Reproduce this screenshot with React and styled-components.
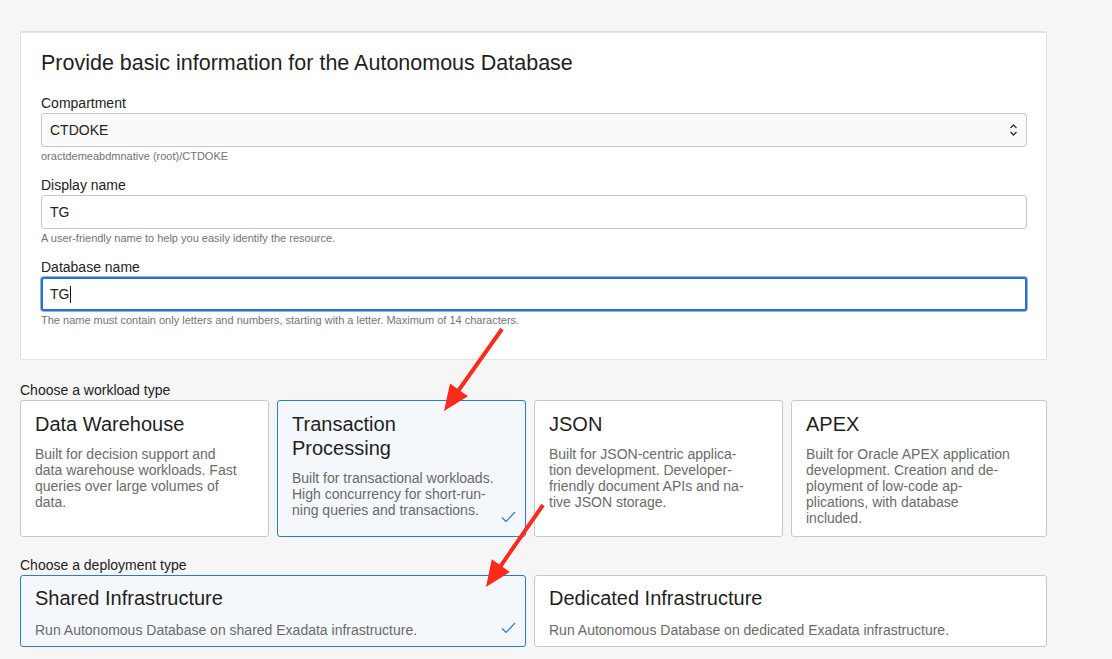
import React from 'react'
import styled, { createGlobalStyle } from 'styled-components'

const GlobalStyle = createGlobalStyle`
  html, body {
    margin: 0;
    padding: 0;
    background: #f6f6f6;
    font-family: 'Liberation Sans', Arial, Helvetica, sans-serif;
    color: #222;
  }
`

const Page = styled.div`
  position: relative;
  width: 1027px;
  padding: 31px 0 12px 20px;
`

const Panel = styled.section`
  background: #fff;
  border: 1px solid #e3e3e3;
  border-top: 2px solid #e2e3e8;
  border-radius: 2px;
  padding: 18px 19px 32px 20px;
`

const Heading = styled.h2`
  margin: 0 0 20px;
  font-size: 21.5px;
  line-height: 24px;
  font-weight: 400;
  color: #1f1f1f;
`

const Field = styled.div`
  & + & {
    margin-top: 14px;
  }
`

const Label = styled.div`
  font-size: 14px;
  line-height: 16px;
  color: #222;
  margin-bottom: 2px;
`

const Box = styled.div`
  position: relative;
  box-sizing: border-box;
  height: 34px;
  display: flex;
  align-items: center;
  padding: 0 8px;
  font-size: 14px;
  color: #222;
  background: ${(p) => (p.$select ? '#fafafa' : '#fff')};
  border: ${(p) => (p.$focused ? '2px solid #2e6fcb' : '1px solid #c8c8c8')};
  border-radius: 3px;
  box-shadow: ${(p) => (p.$focused ? '0 0 0 1px #8fb4ea' : 'none')};
  ${(p) => p.$focused && 'padding-left: 7px;'}
`

const Caret = styled.span`
  display: inline-block;
  width: 1px;
  height: 17px;
  background: #111;
  margin-left: 1px;
`

const Chevron = styled.svg`
  position: absolute;
  right: 8px;
  top: 9px;
`

const Help = styled.div`
  margin-top: 3px;
  font-size: 11px;
  line-height: 13px;
  color: #737373;
`

const SectionLabel = styled.div`
  font-size: 14px;
  line-height: 16px;
  color: #222;
  margin: ${(p) => p.$top}px 0 2px;
`

const CardGrid = styled.div`
  display: grid;
  grid-template-columns: ${(p) => p.$cols};
  gap: 8px;
`

const Card = styled.div`
  position: relative;
  box-sizing: border-box;
  height: ${(p) => p.$height}px;
  padding: ${(p) => p.$padTop}px 14px 10px;
  border: 1px solid ${(p) => (p.$selected ? '#2c78d4' : '#c9c9c9')};
  border-radius: 3px;
  background: ${(p) => (p.$selected ? '#f4f7fb' : '#fff')};
`

const CardTitle = styled.div`
  font-size: 20px;
  line-height: 24px;
  color: #1f1f1f;
`

const CardDesc = styled.div`
  margin-top: ${(p) => p.$gap}px;
  font-size: 14px;
  line-height: 16px;
  color: #6a6a6a;
  white-space: nowrap;
`

const Check = styled.svg`
  position: absolute;
  right: 9px;
  bottom: ${(p) => p.$bottom}px;
`

const Arrows = styled.svg`
  position: absolute;
  left: 0;
  top: 0;
  pointer-events: none;
`

const workloads = [
  {
    title: ['Data Warehouse'],
    desc: ['Built for decision support and', 'data warehouse workloads. Fast', 'queries over large volumes of', 'data.']
  },
  {
    title: ['Transaction', 'Processing'],
    desc: ['Built for transactional workloads.', 'High concurrency for short-run-', 'ning queries and transactions.'],
    selected: true
  },
  {
    title: ['JSON'],
    desc: ['Built for JSON-centric applica-', 'tion development. Developer-', 'friendly document APIs and na-', 'tive JSON storage.']
  },
  {
    title: ['APEX'],
    desc: ['Built for Oracle APEX application', 'development. Creation and de-', 'ployment of low-code ap-', 'plications, with database', 'included.']
  }
]

const deployments = [
  { title: ['Shared Infrastructure'], desc: ['Run Autonomous Database on shared Exadata infrastructure.'], selected: true },
  { title: ['Dedicated Infrastructure'], desc: ['Run Autonomous Database on dedicated Exadata infrastructure.'] }
]

const Lines = ({ lines }) =>
  lines.map((l, i) => (
    <React.Fragment key={i}>
      {i > 0 && <br />}
      {l}
    </React.Fragment>
  ))

const CheckMark = ({ bottom }) => (
  <Check $bottom={bottom} width='15' height='12' viewBox='0 0 15 12'>
    <polyline points='1,6.5 5,10.5 14,1' fill='none' stroke='#2c78d4' strokeWidth='1.2' />
  </Check>
)

const OptionCard = ({ item, height, padTop, gap, checkBottom }) => (
  <Card $selected={item.selected} $height={height} $padTop={padTop}>
    <CardTitle>
      <Lines lines={item.title} />
    </CardTitle>
    <CardDesc $gap={gap}>
      <Lines lines={item.desc} />
    </CardDesc>
    {item.selected && <CheckMark bottom={checkBottom} />}
  </Card>
)

const Arrow = ({ x1, y1, x2, y2 }) => {
  const dx = x2 - x1
  const dy = y2 - y1
  const len = Math.hypot(dx, dy)
  const ux = dx / len
  const uy = dy / len
  const head = 26
  const half = 11
  const bx = x2 - ux * head
  const by = y2 - uy * head
  const pts = `${x2},${y2} ${bx - uy * half},${by + ux * half} ${bx + uy * half},${by - ux * half}`
  return (
    <g>
      <line x1={x1} y1={y1} x2={bx + ux * 2} y2={by + uy * 2} stroke='#fa2a1c' strokeWidth='4' />
      <polygon points={pts} fill='#fa2a1c' />
    </g>
  )
}

export default function App() {
  return (
    <Page>
      <GlobalStyle />
      <Panel>
        <Heading>Provide basic information for the Autonomous Database</Heading>
        <Field>
          <Label>Compartment</Label>
          <Box $select>
            CTDOKE
            <Chevron width='9' height='14' viewBox='0 0 9 14'>
              <polyline points='1.5,5 4.5,2 7.5,5' fill='none' stroke='#333' strokeWidth='1.4' />
              <polyline points='1.5,9 4.5,12 7.5,9' fill='none' stroke='#333' strokeWidth='1.4' />
            </Chevron>
          </Box>
          <Help>oractdemeabdmnative (root)/CTDOKE</Help>
        </Field>
        <Field>
          <Label>Display name</Label>
          <Box>TG</Box>
          <Help>A user-friendly name to help you easily identify the resource.</Help>
        </Field>
        <Field>
          <Label>Database name</Label>
          <Box $focused>
            TG
            <Caret />
          </Box>
          <Help>The name must contain only letters and numbers, starting with a letter. Maximum of 14 characters.</Help>
        </Field>
      </Panel>

      <SectionLabel $top={22}>Choose a workload type</SectionLabel>
      <CardGrid $cols='249px 249px 249px 1fr'>
        {workloads.map((w) => (
          <OptionCard key={w.title.join(' ')} item={w} height={137} padTop={11} gap={10} checkBottom={13} />
        ))}
      </CardGrid>

      <SectionLabel $top={20}>Choose a deployment type</SectionLabel>
      <CardGrid $cols='506px 1fr'>
        {deployments.map((d) => (
          <OptionCard key={d.title.join(' ')} item={d} height={72} padTop={10} gap={12} checkBottom={12} />
        ))}
      </CardGrid>

      <Arrows width='1112' height='659'>
        <Arrow x1={502} y1={329} x2={444} y2={411} />
        <Arrow x1={543} y1={505} x2={486} y2={587} />
      </Arrows>
    </Page>
  )
}
